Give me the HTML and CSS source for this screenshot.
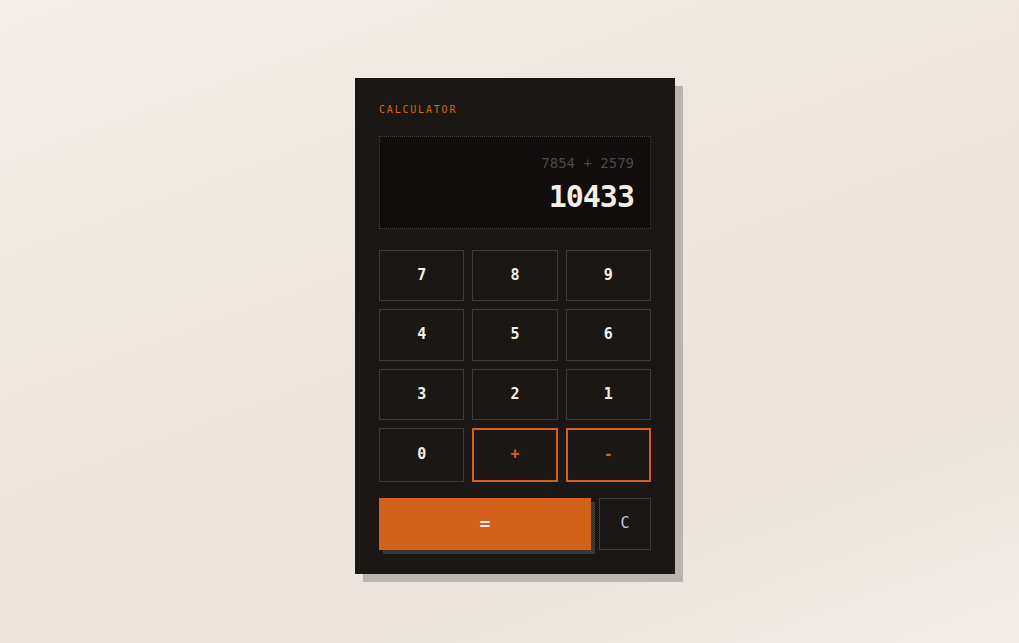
FILE: index.html
```html
<!DOCTYPE html>
<html lang="en">
<head>
<meta charset="utf-8">
<title>Calculator</title>
<link rel="stylesheet" href="styles.css">
</head>
<body>
<main class="stage">
  <section class="calc">
    <h1 class="calc-title">CALCULATOR</h1>
    <div class="display">
      <div class="expr">7854 + 2579</div>
      <div class="result">10433</div>
    </div>
    <div class="keys">
      <button class="key">7</button>
      <button class="key">8</button>
      <button class="key">9</button>
      <button class="key">4</button>
      <button class="key">5</button>
      <button class="key">6</button>
      <button class="key">3</button>
      <button class="key">2</button>
      <button class="key">1</button>
      <button class="key">0</button>
      <button class="key key-op">+</button>
      <button class="key key-op">-</button>
    </div>
    <div class="bottom-row">
      <button class="key key-equals">=</button>
      <button class="key key-clear">C</button>
    </div>
  </section>
</main>
</body>
</html>
```
FILE: styles.css
```css
* { box-sizing: border-box; }
html, body { margin: 0; height: 100%; }
body {
  background: linear-gradient(160deg, #f2eee7 0%, #ede4dd 50%, #ebe3dc 75%, #f1ede6 100%);
  font-family: "DejaVu Sans Mono", "Liberation Mono", monospace;
}
.stage {
  height: 100%;
  display: flex;
  align-items: center;
  justify-content: center;
}
.calc {
  width: 320px;
  margin-left: 11px;
  margin-top: 9px;
  padding: 24px;
  background: #1b1714;
  box-shadow: 8px 8px 0 #b9b4ae;
}
.calc-title {
  margin: 0 0 20px;
  height: 14px;
  font-family: "DejaVu Sans Mono", monospace;
  font-weight: normal;
  font-size: 10px;
  line-height: 14px;
  letter-spacing: 1.8px;
  color: #d2661c;
  padding-top: 1px;
}
.display {
  height: 93px;
  border: 1px dotted #48423e;
  background: #100d0c;
  padding: 16px 16px 0;
  text-align: right;
}
.expr {
  font-size: 14px;
  line-height: 20px;
  color: #4d4946;
}
.result {
  font-size: 30px;
  font-weight: bold;
  line-height: 36px;
  margin-top: 6px;
  color: #f4efe6;
  letter-spacing: -1px;
}
.keys {
  margin-top: 21px;
  display: grid;
  grid-template-columns: repeat(3, 1fr);
  gap: 8px;
}
.key {
  font-family: "DejaVu Sans Mono", monospace;
  font-weight: bold;
  font-size: 15px;
  line-height: 17.4px;
  padding: 16px 0;
  background: #1b1714;
  color: #f4efe6;
  border: 1px solid #403b38;
  border-radius: 0;
  margin: 0;
}
.key-op {
  border: 2px solid #d2611a;
  color: #d2611a;
}
.bottom-row {
  margin-top: 16.4px;
  display: flex;
  gap: 8px;
  position: relative;
  z-index: 0;
}
.key-equals {
  flex: 1;
  position: relative;
  height: 52px;
  background: #d2611a;
  border: none;
  color: #f4efe6;
  font-size: 18px;
}
.key-equals::after {
  content: "";
  position: absolute;
  left: 4px;
  top: 4px;
  right: -4px;
  bottom: -4px;
  z-index: -1;
  background-color: #2a2623;
  background-image: repeating-conic-gradient(#4d4845 0 25%, #2a2623 0 50%);
  background-size: 2px 2px;
}
.key-clear {
  width: 52px;
  height: 52px;
  font-weight: normal;
  color: #c9c6d4;
  font-size: 15px;
}
```
